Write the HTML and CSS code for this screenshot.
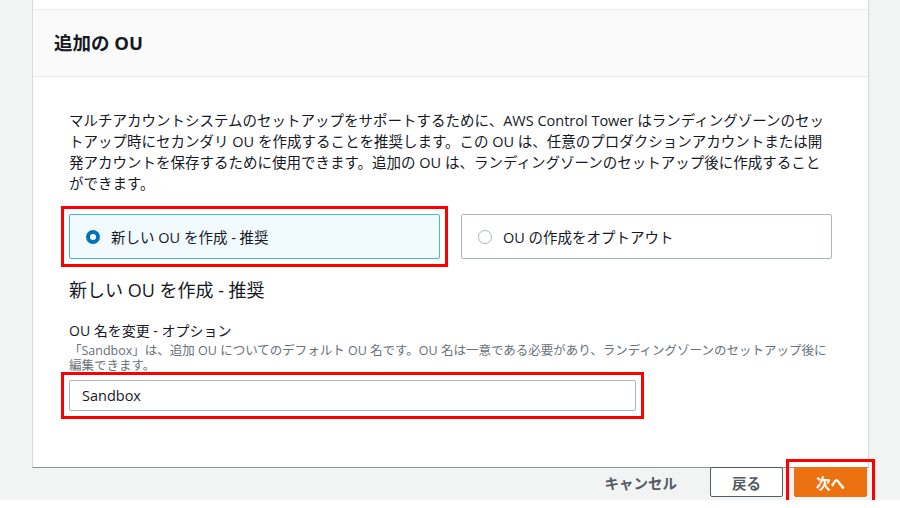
FILE: index.html
```html
<!DOCTYPE html>
<html lang="ja">
<head>
    <meta charset="UTF-8">
    <meta name="viewport" content="width=device-width, initial-scale=1.0">
    <title>追加の OU</title>
    <link rel="stylesheet" href="styles.css">
</head>
<body>
    <div class="page">
        <div class="card">
            <div class="card-top"></div>

            <!-- Section header -->
            <div class="card-header">
                <h2>追加の OU</h2>
            </div>

            <div class="card-body">
                <p class="intro">マルチアカウントシステムのセットアップをサポートするために、AWS Control Tower はランディングゾーンのセットアップ時にセカンダリ OU を作成することを推奨します。この OU は、任意のプロダクションアカウントまたは開発アカウントを保存するために使用できます。追加の OU は、ランディングゾーンのセットアップ後に作成することができます。</p>

                <!-- Create / opt out choice -->
                <div class="tiles">
                    <div class="mark">
                        <label class="tile selected">
                            <span class="radio"></span>
                            <span>新しい OU を作成 - 推奨</span>
                        </label>
                    </div>
                    <label class="tile">
                        <span class="radio"></span>
                        <span>OU の作成をオプトアウト</span>
                    </label>
                </div>

                <h3>新しい OU を作成 - 推奨</h3>

                <div class="field">
                    <div class="field-label">OU 名を変更 - オプション</div>
                    <div class="field-desc">「Sandbox」は、追加 OU についてのデフォルト OU 名です。OU 名は一意である必要があり、ランディングゾーンのセットアップ後に編集できます。</div>
                    <div class="mark mark-input">
                        <input type="text" class="text-input" value="Sandbox">
                    </div>
                </div>
            </div>
        </div>

        <!-- Wizard buttons -->
        <div class="footer">
            <button class="btn btn-link">キャンセル</button>
            <button class="btn btn-normal">戻る</button>
            <div class="mark mark-btn">
                <button class="btn btn-primary">次へ</button>
            </div>
        </div>
    </div>
</body>
</html>
```

FILE: styles.css
```css
body {
    margin: 0;
    background: #ffffff;
    font-family: "Open Sans", "Noto Sans CJK JP", sans-serif;
    color: #16191f;
}
.page {
    height: 500px;
    background: #f2f3f3;
    padding: 0 31px 0 32px;
    box-sizing: border-box;
}
.card {
    height: 468px;
    background: #ffffff;
    border-left: 1px solid #d5dbdb;
    border-right: 1px solid #d5dbdb;
    border-bottom: 1px solid #879596;
    box-sizing: border-box;
}
.card-top {
    height: 9px;
    border-bottom: 1px solid #eaeded;
}
.card-header {
    height: 66px;
    background: #fafafa;
    border-bottom: 1px solid #eaeded;
    padding-left: 21px;
    display: flex;
    align-items: center;
}
.card-header h2 {
    margin: 0;
    font-size: 18.5px;
    line-height: 24px;
    font-weight: bold;
}
.card-body {
    padding: 33px 36px 0 36px;
}
.intro {
    margin: 0;
    font-size: 14.5px;
    line-height: 21px;
}
.tiles {
    display: grid;
    grid-template-columns: 1fr 1fr;
    gap: 21px;
    margin-top: 20px;
}
.tile {
    height: 45px;
    display: flex;
    align-items: center;
    gap: 11px;
    padding-left: 16px;
    border: 1px solid #aab7b8;
    border-radius: 2px;
    font-size: 14.5px;
    box-sizing: border-box;
}
.tile.selected {
    background: #f1faff;
    border-color: #44b9d6;
}
.radio {
    width: 14px;
    height: 14px;
    border-radius: 50%;
    border: 1.5px solid #aab7b8;
    background: #ffffff;
    box-sizing: border-box;
}
.tile.selected .radio {
    border: 4px solid #0073bb;
}
h3 {
    margin: 19px 0 0 0;
    font-size: 18px;
    line-height: 24px;
    font-weight: normal;
}
.field {
    margin-top: 19px;
}
.field-label {
    font-size: 14px;
    line-height: 20px;
}
.field-desc {
    margin-top: 2px;
    font-size: 12.5px;
    line-height: 15px;
    color: #687078;
}
.text-input {
    display: block;
    width: 567px;
    height: 31px;
    padding: 0 12px;
    border: 1px solid #aab7b8;
    border-radius: 2px;
    font-family: inherit;
    font-size: 14.5px;
    color: #16191f;
    background: #ffffff;
    box-sizing: border-box;
}

/* red annotation boxes from the screenshot */
.mark {
    border: 3px solid #ff0000;
    padding: 5px;
    margin: -8px;
    background: #ffffff;
}
.mark-input {
    width: fit-content;
    margin-top: -1px;
    position: relative;
    background: transparent;
}
.mark-btn {
    display: flex;
    background: transparent;
}
.footer {
    display: flex;
    justify-content: flex-end;
    gap: 11px;
    padding-right: 2px;
    margin-top: -1px;
}
.btn {
    height: 30px;
    padding: 0 21px;
    border-radius: 2px;
    font-family: inherit;
    font-size: 14.5px;
    font-weight: bold;
    cursor: pointer;
}
.btn-link {
    padding: 0 22px;
    background: transparent;
    border: none;
    color: #545b64;
}
.btn-normal {
    background: #ffffff;
    border: 1px solid #545b64;
    color: #545b64;
}
.btn-primary {
    background: #ec7211;
    border: 1px solid #ec7211;
    color: #ffffff;
}
```
